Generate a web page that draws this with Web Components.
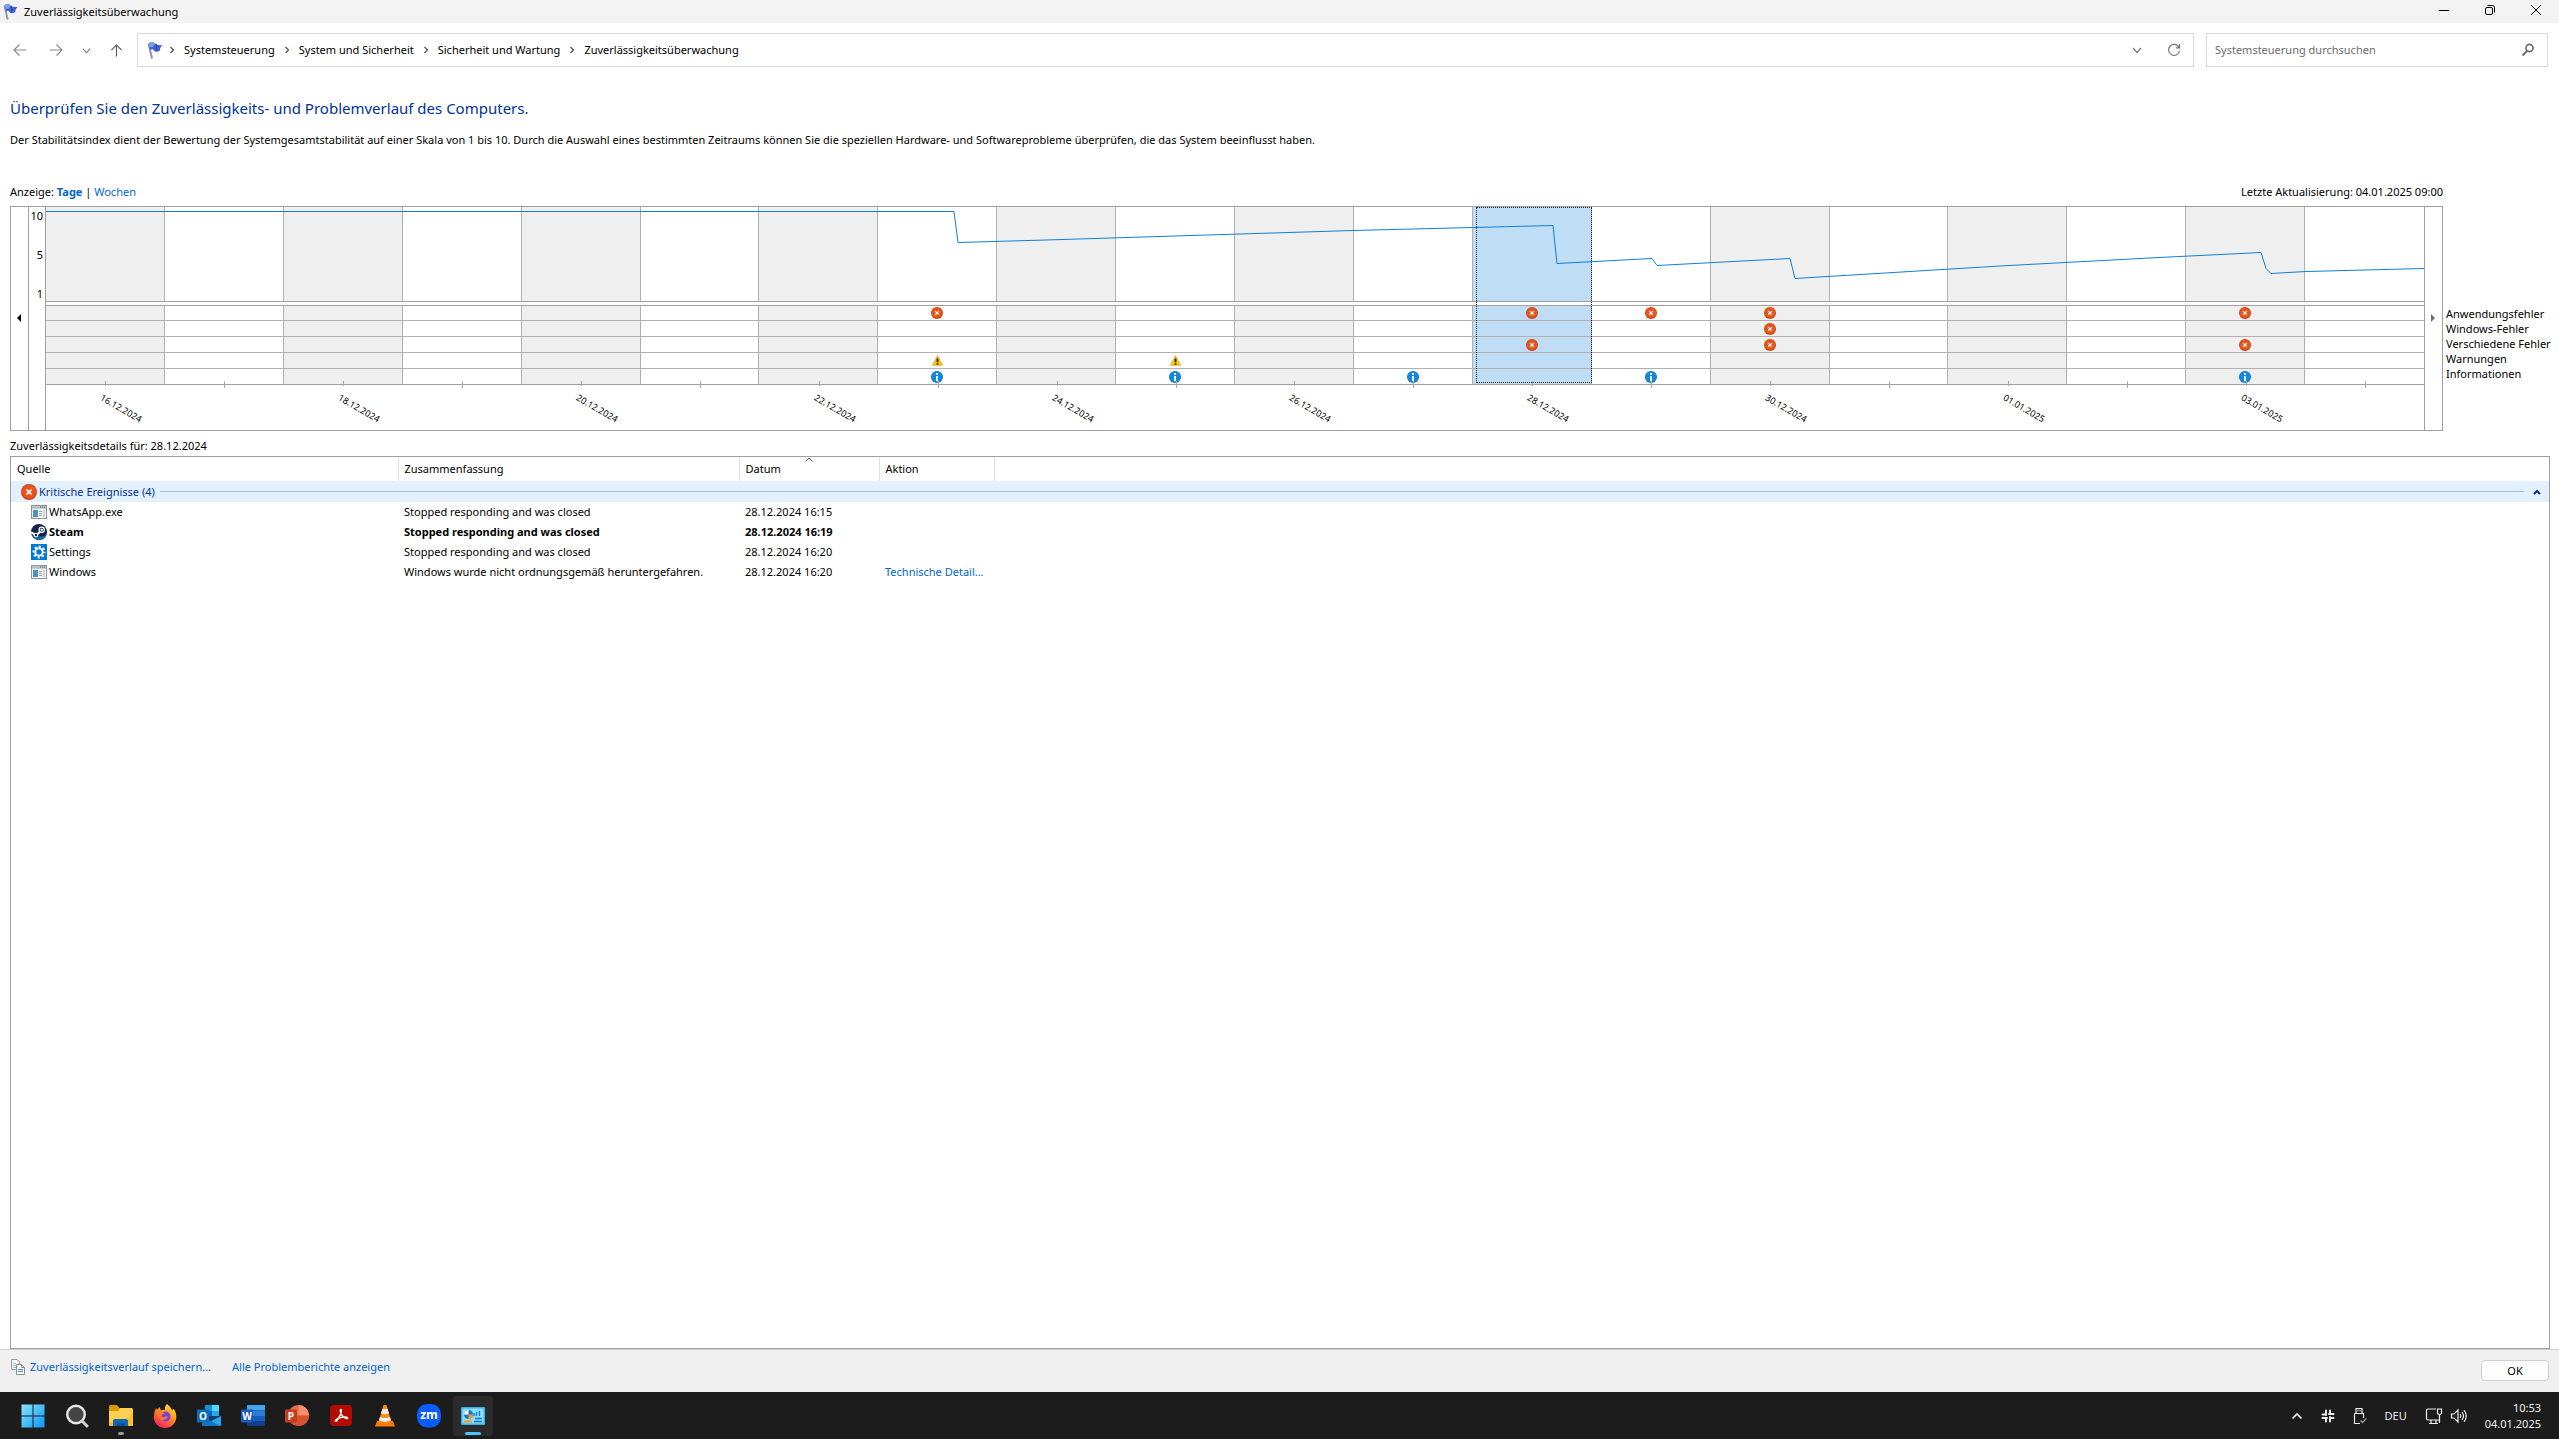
<!DOCTYPE html>
<html lang="de">
<head>
<meta charset="UTF-8">
<title>Zuverlässigkeitsüberwachung</title>
<style>
    html, body { margin: 0; height: 100%; }
    body {
        font-family: 'Noto Sans', 'Open Sans', sans-serif;
        font-size: 11px;
        line-height: 16px;
        color: #000;
        background: #fff;
        --line: #a0a0a0;
        --link: #0066cc;
        --title: #003399;
    }
</style>
</head>
<body>
<reliability-window></reliability-window>

<script>
const ICONS = {
    flag: ['0 0 16 18', `<path d="M1.5 2.5 L5 17.5" stroke="#8b97a5" stroke-width="2"/><path d="M2 2 Q5 0 8 2.500 T15.500 4 Q12.500 7 13 9.500 Q9 12 7 9.500 T3.500 9.500 Z" fill="#3f62d2"/><path d="M2 2 Q5 0 8 2.500 L6 6 L3 6Z" fill="#7f9df0"/><path d="M9 3 Q10 6 9 10" stroke="#2443ad" fill="none"/>`],
    back: ['0 0 14 14', `<path d="M13.500 7 H1 M6.500 1.500 L1 7 L6.500 12.500" fill="none" stroke="#8c8c8c" stroke-width="1.200"/>`],
    forward: ['0 0 14 14', `<path d="M.5 7 H13 M7.500 1.500 L13 7 L7.500 12.500" fill="none" stroke="#8c8c8c" stroke-width="1.200"/>`],
    up: ['0 0 14 14', `<path d="M7 13.500 V1 M1.500 6.500 L7 1 L12.500 6.500" fill="none" stroke="#555" stroke-width="1.200"/>`],
    down: ['0 0 10 10', `<path d="M1 3 L5 7.500 L9 3" fill="none" stroke="#777" stroke-width="1.200"/>`],
    crumb: ['0 0 6 8', `<path d="M1.500 1 L4.500 4 L1.500 7" fill="none" stroke="#555" stroke-width="1.300"/>`],
    refresh: ['0 0 14 14', `<path d="M12 4.500 A5.500 5.500 0 1 0 12.500 7.500 M12.500 1 V4.800 H8.800" fill="none" stroke="#777" stroke-width="1.200"/>`],
    find: ['0 0 14 14', `<circle cx="8.500" cy="5" r="3.600" fill="none" stroke="#666" stroke-width="1.600"/><path d="M6 8 L1.500 12.500" stroke="#666" stroke-width="1.800"/>`],
    minimize: ['0 0 12 12', `<path d="M1 6.500 H11" stroke="#000"/>`],
    restore: ['0 0 12 12', `<rect x="1.500" y="3.500" width="7" height="7" rx="1.500" fill="none" stroke="#000"/><path d="M3.500 1.500 H8.500 Q10.500 1.500 10.500 3.500 V8.500" fill="none" stroke="#000"/>`],
    close: ['0 0 12 12', `<path d="M1 1 L11 11 M11 1 L1 11" stroke="#000"/>`],
    error: ['0 0 16 16', `<circle cx="8" cy="8" r="8" fill="#d23f0e"/><circle cx="8" cy="7.500" r="7" fill="#e5561f"/><path d="M5.500 5.500 L10.500 10.500 M10.500 5.500 L5.500 10.500" stroke="#fff" stroke-width="1.600"/>`],
    warning: ['0 0 16 16', `<path d="M8 .8 L15.500 15 H.5 Z" fill="#fcc419" stroke="#e8a50c"/><path d="M8 5 V10.500 M8 12 V14" stroke="#222" stroke-width="2.600"/>`],
    info: ['0 0 16 16', `<circle cx="8" cy="8" r="8" fill="#0a78cc"/><circle cx="8" cy="7.600" r="7" fill="#1489dc"/><path d="M8 2.500 V5 M8 6.500 V13.500" stroke="#fff" stroke-width="2.600"/>`],
    program: ['0 0 16 14', `<rect x=".5" y=".5" width="15" height="13" fill="#f4f6f8" stroke="#8b939b"/><path d="M1 2.500 H15" stroke="#b4bbc2" stroke-width="2.500"/><path d="M9 2 h1 M11 2 h1 M13 2 h1" stroke="#555"/><rect x="2" y="5" width="5" height="7" fill="#4c8fc9"/><path d="M8 6.500 H11 M8 8.500 H11 M8 10.500 H11" stroke="#9aa3ab"/><rect x="12" y="5" width="2" height="7" fill="#cfd4d9"/>`],
    steam: ['0 0 16 16', `<circle cx="8" cy="8" r="8" fill="#12244d"/><path d="M0 9 Q3 16 8 16 T15.500 11 Q9 15 0 9Z" fill="#1a6ca4"/><path d="M0 8.500 L5.500 11 L11 6" stroke="#fff" stroke-width="2" fill="none"/><circle cx="5" cy="11" r="2.300" fill="#fff"/><circle cx="5" cy="11" r="1.200" fill="#12244d"/><circle cx="10.700" cy="5.800" r="3.200" fill="#fff"/><circle cx="10.700" cy="5.800" r="2" fill="#12244d"/><circle cx="10.700" cy="5.800" r="1.300" fill="#d8dde6"/>`],
    settings: ['0 0 16 16', `<rect width="16" height="16" fill="#0078d7"/><circle cx="8" cy="8" r="3.700" fill="none" stroke="#fff" stroke-width="1.900"/><circle cx="8" cy="8" r="5.500" fill="none" stroke="#fff" stroke-width="2" stroke-dasharray="2.160 2.160" stroke-dashoffset="1"/>`],
    collapse: ['0 0 8 6', `<path d="M1 5 L4 2 L7 5" fill="none" stroke="#003399" stroke-width="2"/>`],
    sort: ['0 0 8 5', `<path d="M.5 4.500 L4 1 L7.500 4.500" fill="none" stroke="#555"/>`],
    prev: ['0 0 4 8', `<path d="M4 0 V8 L0 4 Z" fill="#000"/>`],
    next: ['0 0 4 8', `<path d="M0 0 V8 L4 4 Z" fill="#6d6d6d"/>`],
    copy: ['0 0 14 16', `<path d="M.5 .5 H6 L8.500 3 V10.500 H.5 Z" fill="#fff" stroke="#999"/><path d="M2 4.500 H5 M2 6.500 H5 M2 8.500 H5" stroke="#8db8e8"/><path d="M5.500 5.500 H10.500 L13.500 8.500 V15.500 H5.500 Z" fill="#fff" stroke="#8a8a8a"/><path d="M10.500 5.500 V8.500 H13.500" fill="none" stroke="#8a8a8a"/><path d="M7 10.500 H12 M7 12.500 H12" stroke="#3f8be0"/>`],
    start: ['0 0 24 24', `<defs><linearGradient id="g" x1="0" y1="0" x2="1" y2="1"><stop offset="0" stop-color="#8be4ff"/><stop offset="1" stop-color="#0a95f5"/></linearGradient></defs><path d="M.5 .5 H11.500 V11.500 H.5Z M12.500 .5 H23.500 V11.500 H12.500Z M.5 12.500 H11.500 V23.500 H.5Z M12.500 12.500 H23.500 V23.500 H12.500Z" fill="url(#g)"/>`],
    search: ['0 0 24 24', `<circle cx="11" cy="10.500" r="8.800" fill="#454545" stroke="#e8e8e8" stroke-width="2.400"/><path d="M17 17 L22 22" stroke="#d0d0d0" stroke-width="3" stroke-linecap="round"/>`],
    explorer: ['0 0 24 24', `<path d="M0 2.500 Q0 1 1.500 1 H8 L10.500 4 H22 V9 H0Z" fill="#d99a00"/><path d="M0 7 H9 L11.500 4 H22.500 Q24 4 24 5.500 V20.500 Q24 22 22.500 22 H1.500 Q0 22 0 20.500Z" fill="#ffd04f"/><path d="M0 18 Q16 20 24 8 V20.500 Q24 22 22.500 22 H1.500 Q0 22 0 20.500Z" fill="#fbc02d"/><path d="M4 22 V17 Q4 15 6 15 H17 Q19 15 19 17 V22Z" fill="#0f68b5"/><path d="M8 19 H15.500 V22 H8Z" fill="#0a4f92"/>`],
    firefox: ['0 0 24 24', `<defs><linearGradient id="g" x1=".8" y1="0" x2=".2" y2="1"><stop offset="0" stop-color="#ffe83b"/><stop offset=".45" stop-color="#ff8a1c"/><stop offset="1" stop-color="#f5156c"/></linearGradient></defs><path d="M14 0 Q18 3 19 6 L21 5 Q23.500 9 23.300 13 A11.300 11 0 0 1 .7 13 Q.6 8 3 4 L4 6 L6.500 3 L8 6.500 Q10 5.500 12 6 Q11 3 14 0Z" fill="url(#g)"/><circle cx="12.500" cy="12.500" r="5" fill="#7a3fe0"/><path d="M3 8 Q8 6.500 12 9.500 Q8 10 8.500 12.500 Q11 14 15 12 Q13 17 8 15.500 Q4 13 3 8Z" fill="#ff7b27"/>`],
    outlook: ['0 0 24 24', `<path d="M8 1 H22 V13 H8Z" fill="#1490df"/><path d="M15 1 H22 V7 H15Z" fill="#50d9ff"/><path d="M8 7 H15 V13 H8Z" fill="#0364b8"/><path d="M15 7 H22 V13 H15Z" fill="#28a8ea"/><path d="M5 12 H24 V21 Q24 22 23 22 H6 Q5 22 5 21Z" fill="#123b6d"/><path d="M5 22 L24 12 V21 Q24 22 23 22Z" fill="#28a8ea"/><path d="M5 12 L23 22 H6 Q5 22 5 21Z" fill="#1473c5"/><rect y="5.500" width="12" height="13" rx="1" fill="#0f6cbd"/>`, 'O'],
    word: ['0 0 24 24', `<path d="M6 1 H24 V6.500 H6Z" fill="#41a5ee"/><path d="M6 6.500 H24 V12 H6Z" fill="#2b7cd3"/><path d="M6 12 H24 V17 H6Z" fill="#185abd"/><path d="M6 17 H24 V22 H6Z" fill="#103f91"/><rect y="5.500" width="12" height="13" rx="1" fill="#185abd"/>`, 'W'],
    powerpoint: ['0 0 24 24', `<circle cx="13.500" cy="11.500" r="10.500" fill="#ed6c47"/><path d="M13.500 1 A10.500 10.500 0 0 1 24 11.500 H13.500Z" fill="#ff8f6b"/><path d="M3 11.500 H24 A10.500 10.500 0 0 1 3 11.500Z" fill="#d35230"/><rect y="5.500" width="12" height="13" rx="1" fill="#c43e1c"/>`, 'P'],
    acrobat: ['0 0 24 24', `<rect x="1" y="1" width="22" height="21" rx="4" fill="#b30b00"/><path d="M12 5.500 C10.500 5.500 11.500 10 14 12.500 C17 15 19.500 15 18.500 13.800 C17.500 12.500 12 13 8.500 14.700 C5.500 16.500 6 18.500 8 16.500 C10 14 13.500 7 12 5.500Z" fill="none" stroke="#fff" stroke-width="1.400"/>`],
    vlc: ['0 0 24 24', `<path d="M4 17 H20 L22 22.500 H2Z" fill="#f57c00"/><path d="M10.500 1 H13.500 L18.500 18 Q12 21.500 5.500 18Z" fill="#ff8a12"/><path d="M9.300 5 H14.700 L16 9.500 Q12 11 8 9.500Z M7 13 Q12 15 17 13 L18 16.300 Q12 19 6 16.300Z" fill="#eee"/>`],
    zoom: ['0 0 24 24', `<rect width="24" height="23.500" rx="10" fill="#0b5cff"/>`, 'zm'],
    panel: ['0 0 24 18', `<rect width="24" height="18" rx="1" fill="#36b4ea"/><rect x="1.500" y="1.500" width="21" height="15" fill="#8adcf8"/><circle cx="7.500" cy="7.500" r="4.500" fill="#1478c8"/><path d="M7.500 7.500 V3 A4.500 4.500 0 0 0 3 7.500Z" fill="#fff"/><path d="M7.500 7.500 H12 A4.500 4.500 0 0 1 7.500 12Z" fill="#ff9a1f"/><path d="M13 9 V6 M15.500 9 V5 M18.500 9 V4" stroke="#1478c8" stroke-width="1.300"/><path d="M3 14.500 H11" stroke="#ff9a1f" stroke-width="2"/><path d="M13 14.500 H21 M14 11.500 H21" stroke="#1478c8" stroke-width="1.500"/>`],
    caret: ['0 0 12 8', `<path d="M1.500 6.500 L6 2 L10.500 6.500" fill="none" stroke="#eee" stroke-width="1.700"/>`],
    slack: ['0 0 14 14', `<path d="M5 1.500 V6 M9 8 V12.500 M8 5 H12.500 M1.500 9 H6 M1.500 5.500 H5 M9 1.500 V5 M9 9 H12.500 M5 9 V12.500" stroke="#f2f2f2" stroke-width="1.900" stroke-linecap="round"/>`],
    usb: ['0 0 14 18', `<path d="M3 6 V1.500 H9 V6 M1.500 6.500 H10.500 V11 M7 16.500 H1.500 V6.500" fill="none" stroke="#eee" stroke-width="1.200"/><path d="M4.500 3.500 h1 M6.500 3.500 h1" stroke="#eee" stroke-width="1.500"/><path d="M7.500 13.500 L9.500 15.500 L13.500 11.500" fill="none" stroke="#999" stroke-width="1.400"/>`],
    network: ['0 0 18 18', `<path d="M11 2 H3 Q1.500 2 1.500 3.500 V11.500 Q1.500 13 3 13 H15 M6 13 V16 M11 13 V16 M4 16.500 H13" fill="none" stroke="#eee" stroke-width="1.200"/><path d="M12.500 2 H16.500 V6.500 L14.500 8 L12.500 6.500Z M14.500 8 V16" fill="none" stroke="#eee" stroke-width="1.200"/>`],
    sound: ['0 0 18 16', `<path d="M1.500 6 H4 L8 2 V14 L4 10 H1.500Z" fill="none" stroke="#eee" stroke-width="1.200"/><path d="M10 6 Q11.500 8 10 10 M12 4 Q15 8 12 12 M14 2 Q18.500 8 14 14" fill="none" stroke="#eee" stroke-width="1.200"/>`]
};

// <ui-icon name="flag" width="16" height="18">
class UiIcon extends HTMLElement {

    connectedCallback() {
        this.attachShadow({ mode: 'open' });

        const [viewBox, shapes, letter] = ICONS[this.getAttribute('name')];
        const width = this.getAttribute('width') || 16;
        const height = this.getAttribute('height') || width;

        this.shadowRoot.innerHTML = `
        <style>
            :host {
                display: inline-block;
                flex: none;
                width: ${width}px;
                height: ${height}px;
            }
            svg { display: block; width: 100%; height: 100%; }
            text {
                font-family: 'Open Sans', sans-serif;
                font-weight: bold;
                font-size: ${letter === 'zm' ? 12 : 10}px;
                fill: #fff;
                text-anchor: middle;
            }
        </style>
        <svg viewBox="${viewBox}" fill="none" aria-hidden="true">
            ${shapes}
            ${letter ? `<text x="${letter === 'zm' ? 12 : 6}" y="${letter === 'zm' ? 15 : 16}">${letter}</text>` : ''}
        </svg>
        `;
    }
}

class TitleBar extends HTMLElement {

    connectedCallback() {
        this.attachShadow({ mode: 'open' });
        this.shadowRoot.innerHTML = `
        <style>
            :host {
                display: flex;
                align-items: center;
                height: 23px;
                padding-left: 3px;
                background: #f3f3f3;
            }
            .title { flex: 1; margin-left: 6px; }
            button {
                display: flex;
                align-items: center;
                justify-content: center;
                width: 46px;
                height: 20px;
                padding: 0;
                border: 0;
                background: none;
                align-self: flex-start;
            }
        </style>
        <ui-icon name="flag" width="15" height="17"></ui-icon>
        <span class="title"><slot></slot></span>
        <button aria-label="Minimieren"><ui-icon name="minimize" width="12"></ui-icon></button>
        <button aria-label="Verkleinern"><ui-icon name="restore" width="12"></ui-icon></button>
        <button aria-label="Schließen"><ui-icon name="close" width="12"></ui-icon></button>
        `;
    }
}

class AddressBar extends HTMLElement {

    connectedCallback() {
        this.attachShadow({ mode: 'open' });
        const path = this.getAttribute('path').split('/');

        this.shadowRoot.innerHTML = `
        <style>
            :host {
                display: flex;
                align-items: center;
                gap: 6px;
                padding: 10px 11px 0 5px;
            }
            button {
                display: flex;
                align-items: center;
                justify-content: center;
                width: 30px;
                height: 30px;
                padding: 0;
                border: 0;
                background: none;
            }
            button.narrow { width: 18px; }
            .box {
                display: flex;
                align-items: center;
                box-sizing: border-box;
                height: 34px;
                border: 1px solid #d9d9d9;
                background: #fff;
            }
            nav { flex: 1; padding: 0 1px 0 9px; }
            nav a { color: inherit; text-decoration: none; }
            nav .sep { margin: 0 9px; }
            nav ui-icon + .sep { margin-left: 6px; }
            nav .fill { flex: 1; }
            nav button { width: 37px; }
            .search { width: 342px; margin-left: 6px; padding: 0 12px 0 8px; }
            input {
                flex: 1;
                min-width: 0;
                padding: 0;
                border: 0;
                outline: 0;
                font: inherit;
                background: none;
            }
            input::placeholder { color: #6d6d6d; opacity: 1; }
        </style>
        <button aria-label="Zurück"><ui-icon name="back" width="14"></ui-icon></button>
        <button aria-label="Vorwärts"><ui-icon name="forward" width="14"></ui-icon></button>
        <button class="narrow" aria-label="Zuletzt besucht"><ui-icon name="down" width="9"></ui-icon></button>
        <button aria-label="Nach oben"><ui-icon name="up" width="13"></ui-icon></button>
        <nav class="box">
            <ui-icon name="flag" width="16" height="18"></ui-icon>
            ${path.map(p => `<ui-icon class="sep" name="crumb" width="6" height="8"></ui-icon><a href="#">${p}</a>`).join('')}
            <span class="fill"></span>
            <button aria-label="Verlauf"><ui-icon name="down" width="10"></ui-icon></button>
            <button aria-label="Aktualisieren"><ui-icon name="refresh" width="14"></ui-icon></button>
        </nav>
        <label class="box search">
            <input type="text" placeholder="Systemsteuerung durchsuchen" aria-label="Systemsteuerung durchsuchen">
            <ui-icon name="find" width="14"></ui-icon>
        </label>
        `;
    }
}

class PageIntro extends HTMLElement {

    connectedCallback() {
        this.attachShadow({ mode: 'open' });
        this.shadowRoot.innerHTML = `
        <style>
            :host { display: block; padding: 30px 10px 36px; }
            h1 {
                margin: 0 0 13px;
                font-size: 15px;
                line-height: 22px;
                font-weight: normal;
                color: var(--title);
            }
            p { margin: 0; }
        </style>
        <h1><slot name="title"></slot></h1>
        <p><slot></slot></p>
        `;
    }
}

// Index values along the plot, in a 2378 x 94 box that is stretched to the plot's width
const INDEX_LINE = '0,4.500 908,4.500 912,35.500 1000,33 1307,23.500 1507,18.500 1511,56.500 1606,51.500 1611,58.500 1744,51.500 1749,71.500 1954,59 2113,50.500 2215,45.500 2220,61.500 2225,66.500 2260,64.500 2378,61.500';

const ROWS = ['Anwendungsfehler', 'Windows-Fehler', 'Verschiedene Fehler', 'Warnungen', 'Informationen'];

// day index -> icon in each row
const EVENTS = {
    7: ['error', '', '', 'warning', 'info'],
    9: ['', '', '', 'warning', 'info'],
    11: ['', '', '', '', 'info'],
    12: ['error', '', 'error', '', ''],
    13: ['error', '', '', '', 'info'],
    14: ['error', 'error', 'error', '', ''],
    18: ['error', '', 'error', '', 'info']
};

class StabilityChart extends HTMLElement {

    connectedCallback() {
        this.attachShadow({ mode: 'open' });
        const selected = parseInt(this.getAttribute('selected'));
        const first = new Date(2024, 11, 16);
        const days = [];

        for (let i = 0; i < 20; i++) {
            const d = new Date(first);
            d.setDate(first.getDate() + i);
            const label = d.toLocaleDateString('de-DE', { day: '2-digit', month: '2-digit', year: 'numeric' });
            days.push({ label, events: EVENTS[i] || ['', '', '', '', ''] });
        }

        this.shadowRoot.innerHTML = `
        <style>
            :host { display: block; padding: 0 10px; }
            .top {
                display: flex;
                justify-content: space-between;
                margin: 0 106px 6px 0;
            }
            a { color: var(--link); text-decoration: none; }
            .body { display: flex; }
            .chart {
                flex: 1;
                display: grid;
                grid-template-columns: 18px 16px 1fr 18px;
                border: 1px solid var(--line);
            }
            .step {
                display: flex;
                align-items: center;
                justify-content: center;
                padding: 0 1px 2px 0;
                border: 0;
                background: none;
            }
            .step.left { border-right: 1px solid var(--line); }
            .step.right { border-left: 1px solid var(--line); }
            .scale {
                display: flex;
                flex-direction: column;
                justify-content: space-between;
                height: 95px;
                box-sizing: border-box;
                padding: 1px 2px 0 0;
                text-align: right;
            }
            .plot { position: relative; border-left: 1px solid var(--line); }
            .days { display: grid; grid-template-columns: repeat(20, 1fr); }
            .day {
                position: relative;
                display: block;
                padding: 0;
                border: 0;
                background: none;
            }
            .area, .cell {
                box-sizing: border-box;
                border-right: 1px solid #b0b0b0;
                border-bottom: 1px solid #b0b0b0;
                background: #fff;
            }
            .area { height: 95px; margin-bottom: 3px; border-bottom-color: var(--line); }
            .cell {
                display: flex;
                align-items: center;
                justify-content: center;
                height: 16px;
            }
            .area + .cell { border-top: 1px solid var(--line); }
            .cell:last-child { border-bottom-color: var(--line); }
            .day:nth-child(odd) > * { background: #efefef; }
            .day.selected > * { background: #bfddf5; }
            .day.selected::after {
                content: '';
                position: absolute;
                inset: 0 0 2px 3px;
                border: 1px dotted #222;
            }
            .day:last-child > * { border-right: 0; }
            svg {
                position: absolute;
                top: 0;
                left: 0;
                width: 100%;
                height: 94px;
                pointer-events: none;
            }
            .axis { display: grid; grid-template-columns: repeat(20, 1fr); height: 45px; }
            .axis span { position: relative; }
            .axis span::before {
                content: '';
                position: absolute;
                left: 50%;
                top: -4px;
                height: 7px;
                border-left: 1px solid #a8a8a8;
            }
            .axis span:nth-child(odd)::before { height: 5px; }
            .axis time {
                position: absolute;
                left: calc(50% - 4px);
                top: 6px;
                font-size: 9px;
                line-height: 12px;
                transform: rotate(30deg);
                transform-origin: 0 50%;
            }
            .legend {
                width: 103px;
                padding: 100px 0 0 3px;
                margin: 0;
                list-style: none;
                line-height: 15px;
                white-space: nowrap;
            }
        </style>
        <div class="top">
            <span>Anzeige: <a href="#"><b>Tage</b></a> | <a href="#">Wochen</a></span>
            <span>Letzte Aktualisierung: ${this.getAttribute('updated')}</span>
        </div>
        <div class="body">
            <div class="chart">
                <button class="step left" aria-label="Früher"><ui-icon name="prev" width="4" height="8"></ui-icon></button>
                <div class="scale"><span>10</span><span>5</span><span>1</span></div>
                <div class="plot">
                    <div class="days">
                        ${days.map((d, i) => `<button class="day${i === selected ? ' selected' : ''}" aria-label="${d.label}">
                            <div class="area"></div>
                            ${d.events.map(e => `<div class="cell">${e ? `<ui-icon name="${e}" width="${e === 'warning' ? 11 : 12}"></ui-icon>` : ''}</div>`).join('')}
                        </button>`).join('')}
                    </div>
                    <div class="axis">
                        ${days.map((d, i) => `<span>${i % 2 ? '' : `<time>${d.label}</time>`}</span>`).join('')}
                    </div>
                    <svg viewBox="0 0 2378 94" preserveAspectRatio="none">
                        <polyline points="${INDEX_LINE}" fill="none" stroke="#0f7fd6" vector-effect="non-scaling-stroke"/>
                    </svg>
                </div>
                <button class="step right" aria-label="Später"><ui-icon name="next" width="4" height="8"></ui-icon></button>
            </div>
            <ul class="legend">
                ${ROWS.map(r => `<li>${r}</li>`).join('')}
            </ul>
        </div>
        `;
    }
}

const DETAILS = [
    { icon: 'program', source: 'WhatsApp.exe', summary: 'Stopped responding and was closed', date: '28.12.2024 16:15' },
    { icon: 'steam', source: 'Steam', summary: 'Stopped responding and was closed', date: '28.12.2024 16:19', unread: true },
    { icon: 'settings', source: 'Settings', summary: 'Stopped responding and was closed', date: '28.12.2024 16:20' },
    { icon: 'program', source: 'Windows', summary: 'Windows wurde nicht ordnungsgemäß heruntergefahren.', date: '28.12.2024 16:20', action: 'Technische Detail...' }
];

class DetailList extends HTMLElement {

    connectedCallback() {
        this.attachShadow({ mode: 'open' });
        this.shadowRoot.innerHTML = `
        <style>
            :host {
                display: flex;
                flex-direction: column;
                flex: 1;
                padding: 7px 9px 0 10px;
            }
            .frame {
                flex: 1;
                margin-top: 2px;
                border: 1px solid var(--line);
            }
            table {
                width: 100%;
                table-layout: fixed;
                border-collapse: collapse;
            }
            th, td { padding: 0 6px; text-align: left; white-space: nowrap; }
            th {
                position: relative;
                height: 24px;
                font-weight: normal;
                border-right: 1px solid #e0e0e0;
            }
            th:last-child { border: 0; }
            th ui-icon { position: absolute; top: 0; left: 50%; margin-left: -4px; }
            td { height: 20px; }
            .unread { font-weight: bold; }
            .group td { height: 21px; background: #e3f1fe; color: var(--title); padding: 0 6px 0 10px; }
            .group div, .source { display: flex; align-items: center; gap: 2px; }
            .group i { flex: 1; margin: 0 5px 0 3px; border-top: 1px solid #a0bfe4; }
            .group button { display: flex; padding: 0 2px; border: 0; background: none; }
            .source { padding-left: 14px; }
            a { color: var(--link); text-decoration: none; }
        </style>
        <div>Zuverlässigkeitsdetails für: ${this.getAttribute('day')}</div>
        <div class="frame">
            <table>
                <colgroup><col style="width: 387px"><col style="width: 341px"><col style="width: 140px"><col style="width: 115px"><col></colgroup>
                <thead>
                    <tr><th>Quelle</th><th>Zusammenfassung</th><th>Datum<ui-icon name="sort" width="8" height="5"></ui-icon></th><th>Aktion</th><th></th></tr>
                </thead>
                <tbody>
                    <tr class="group"><td colspan="5"><div>
                        <ui-icon name="error" width="16"></ui-icon>Kritische Ereignisse (4)<i></i>
                        <button aria-label="Gruppe zuklappen"><ui-icon name="collapse" width="8" height="6"></ui-icon></button>
                    </div></td></tr>
                    ${DETAILS.map(d => `<tr class="${d.unread ? 'unread' : ''}">
                        <td><div class="source"><ui-icon name="${d.icon}" width="16" height="${d.icon === 'program' ? 14 : 16}"></ui-icon>${d.source}</div></td>
                        <td>${d.summary}</td>
                        <td>${d.date}</td>
                        <td>${d.action ? `<a href="#">${d.action}</a>` : ''}</td>
                        <td></td>
                    </tr>`).join('')}
                </tbody>
            </table>
        </div>
        `;
    }
}

class ActionFooter extends HTMLElement {

    connectedCallback() {
        this.attachShadow({ mode: 'open' });
        this.shadowRoot.innerHTML = `
        <style>
            :host {
                display: flex;
                align-items: flex-start;
                box-sizing: border-box;
                height: 43px;
                padding: 9px 10px 0 11px;
                border-top: 1px solid #cfcfcf;
                background: #f0f0f0;
            }
            a {
                display: flex;
                gap: 5px;
                margin-right: 21px;
                color: var(--link);
                text-decoration: none;
            }
            button {
                width: 68px;
                height: 21px;
                margin: 1px 0 0 auto;
                padding: 0;
                font: inherit;
                color: inherit;
                background: #fdfdfd;
                border: 1px solid #d0d0d0;
                border-radius: 4px;
            }
        </style>
        <a href="#"><ui-icon name="copy" width="14" height="16"></ui-icon>Zuverlässigkeitsverlauf speichern...</a>
        <a href="#">Alle Problemberichte anzeigen</a>
        <button>OK</button>
        `;
    }
}

class TaskBar extends HTMLElement {

    connectedCallback() {
        this.attachShadow({ mode: 'open' });
        const apps = ['start', 'search', 'explorer', 'firefox', 'outlook', 'word', 'powerpoint', 'acrobat', 'vlc', 'zoom', 'panel'];

        this.shadowRoot.innerHTML = `
        <style>
            :host {
                display: flex;
                align-items: center;
                justify-content: space-between;
                height: 47px;
                padding: 0 18px 0 13px;
                background: #1c1c1c;
                color: #f0f0f0;
            }
            .apps, .tray { display: flex; align-items: center; }
            .apps { gap: 4px; }
            button {
                display: flex;
                align-items: center;
                justify-content: center;
                padding: 0;
                border: 0;
                background: none;
                color: inherit;
                font: inherit;
            }
            .apps button {
                position: relative;
                width: 40px;
                height: 40px;
                border-radius: 4px;
            }
            .apps .active { background: #2b2b2b; }
            .running::after, .active::after {
                content: '';
                position: absolute;
                bottom: 1px;
                width: 6px;
                height: 3px;
                border-radius: 2px;
                background: #9a9a9a;
            }
            .active::after { width: 16px; background: #4cc2ff; }
            .tray { gap: 18px; }
            .pair { gap: 7px; }
            .clock { display: block; text-align: right; margin-left: -1px; }
            .clock span { display: block; }
        </style>
        <div class="apps">
            ${apps.map(a => `<button class="${a === 'explorer' ? 'running' : a === 'panel' ? 'active' : ''}" aria-label="${a}">
                <ui-icon name="${a}" width="24" height="${a === 'panel' ? 18 : 24}"></ui-icon>
            </button>`).join('')}
        </div>
        <div class="tray">
            <button aria-label="Ausgeblendete Symbole"><ui-icon name="caret" width="12" height="8"></ui-icon></button>
            <button aria-label="Slack"><ui-icon name="slack" width="14"></ui-icon></button>
            <button aria-label="USB"><ui-icon name="usb" width="14" height="18"></ui-icon></button>
            <button>DEU</button>
            <button class="pair" aria-label="Netzwerk und Ton"><ui-icon name="network" width="18"></ui-icon><ui-icon name="sound" width="18" height="16"></ui-icon></button>
            <button class="clock"><span>10:53</span><span>04.01.2025</span></button>
        </div>
        `;
    }
}

class ReliabilityWindow extends HTMLElement {

    connectedCallback() {
        this.attachShadow({ mode: 'open' });
        this.shadowRoot.innerHTML = `
        <style>
            :host {
                display: flex;
                flex-direction: column;
                min-height: 100vh;
            }
        </style>
        <title-bar>Zuverlässigkeitsüberwachung</title-bar>
        <address-bar path="Systemsteuerung/System und Sicherheit/Sicherheit und Wartung/Zuverlässigkeitsüberwachung"></address-bar>
        <page-intro>
            <span slot="title">Überprüfen Sie den Zuverlässigkeits- und Problemverlauf des Computers.</span>
            Der Stabilitätsindex dient der Bewertung der Systemgesamtstabilität auf einer Skala von 1 bis 10. Durch die Auswahl eines bestimmten Zeitraums können Sie die speziellen Hardware- und Softwareprobleme überprüfen, die das System beeinflusst haben.
        </page-intro>
        <stability-chart selected="12" updated="04.01.2025 09:00"></stability-chart>
        <detail-list day="28.12.2024"></detail-list>
        <action-footer></action-footer>
        <task-bar></task-bar>
        `;
    }
}

customElements.define('ui-icon', UiIcon);
customElements.define('title-bar', TitleBar);
customElements.define('address-bar', AddressBar);
customElements.define('page-intro', PageIntro);
customElements.define('stability-chart', StabilityChart);
customElements.define('detail-list', DetailList);
customElements.define('action-footer', ActionFooter);
customElements.define('task-bar', TaskBar);
customElements.define('reliability-window', ReliabilityWindow);
</script>
</body>
</html>
